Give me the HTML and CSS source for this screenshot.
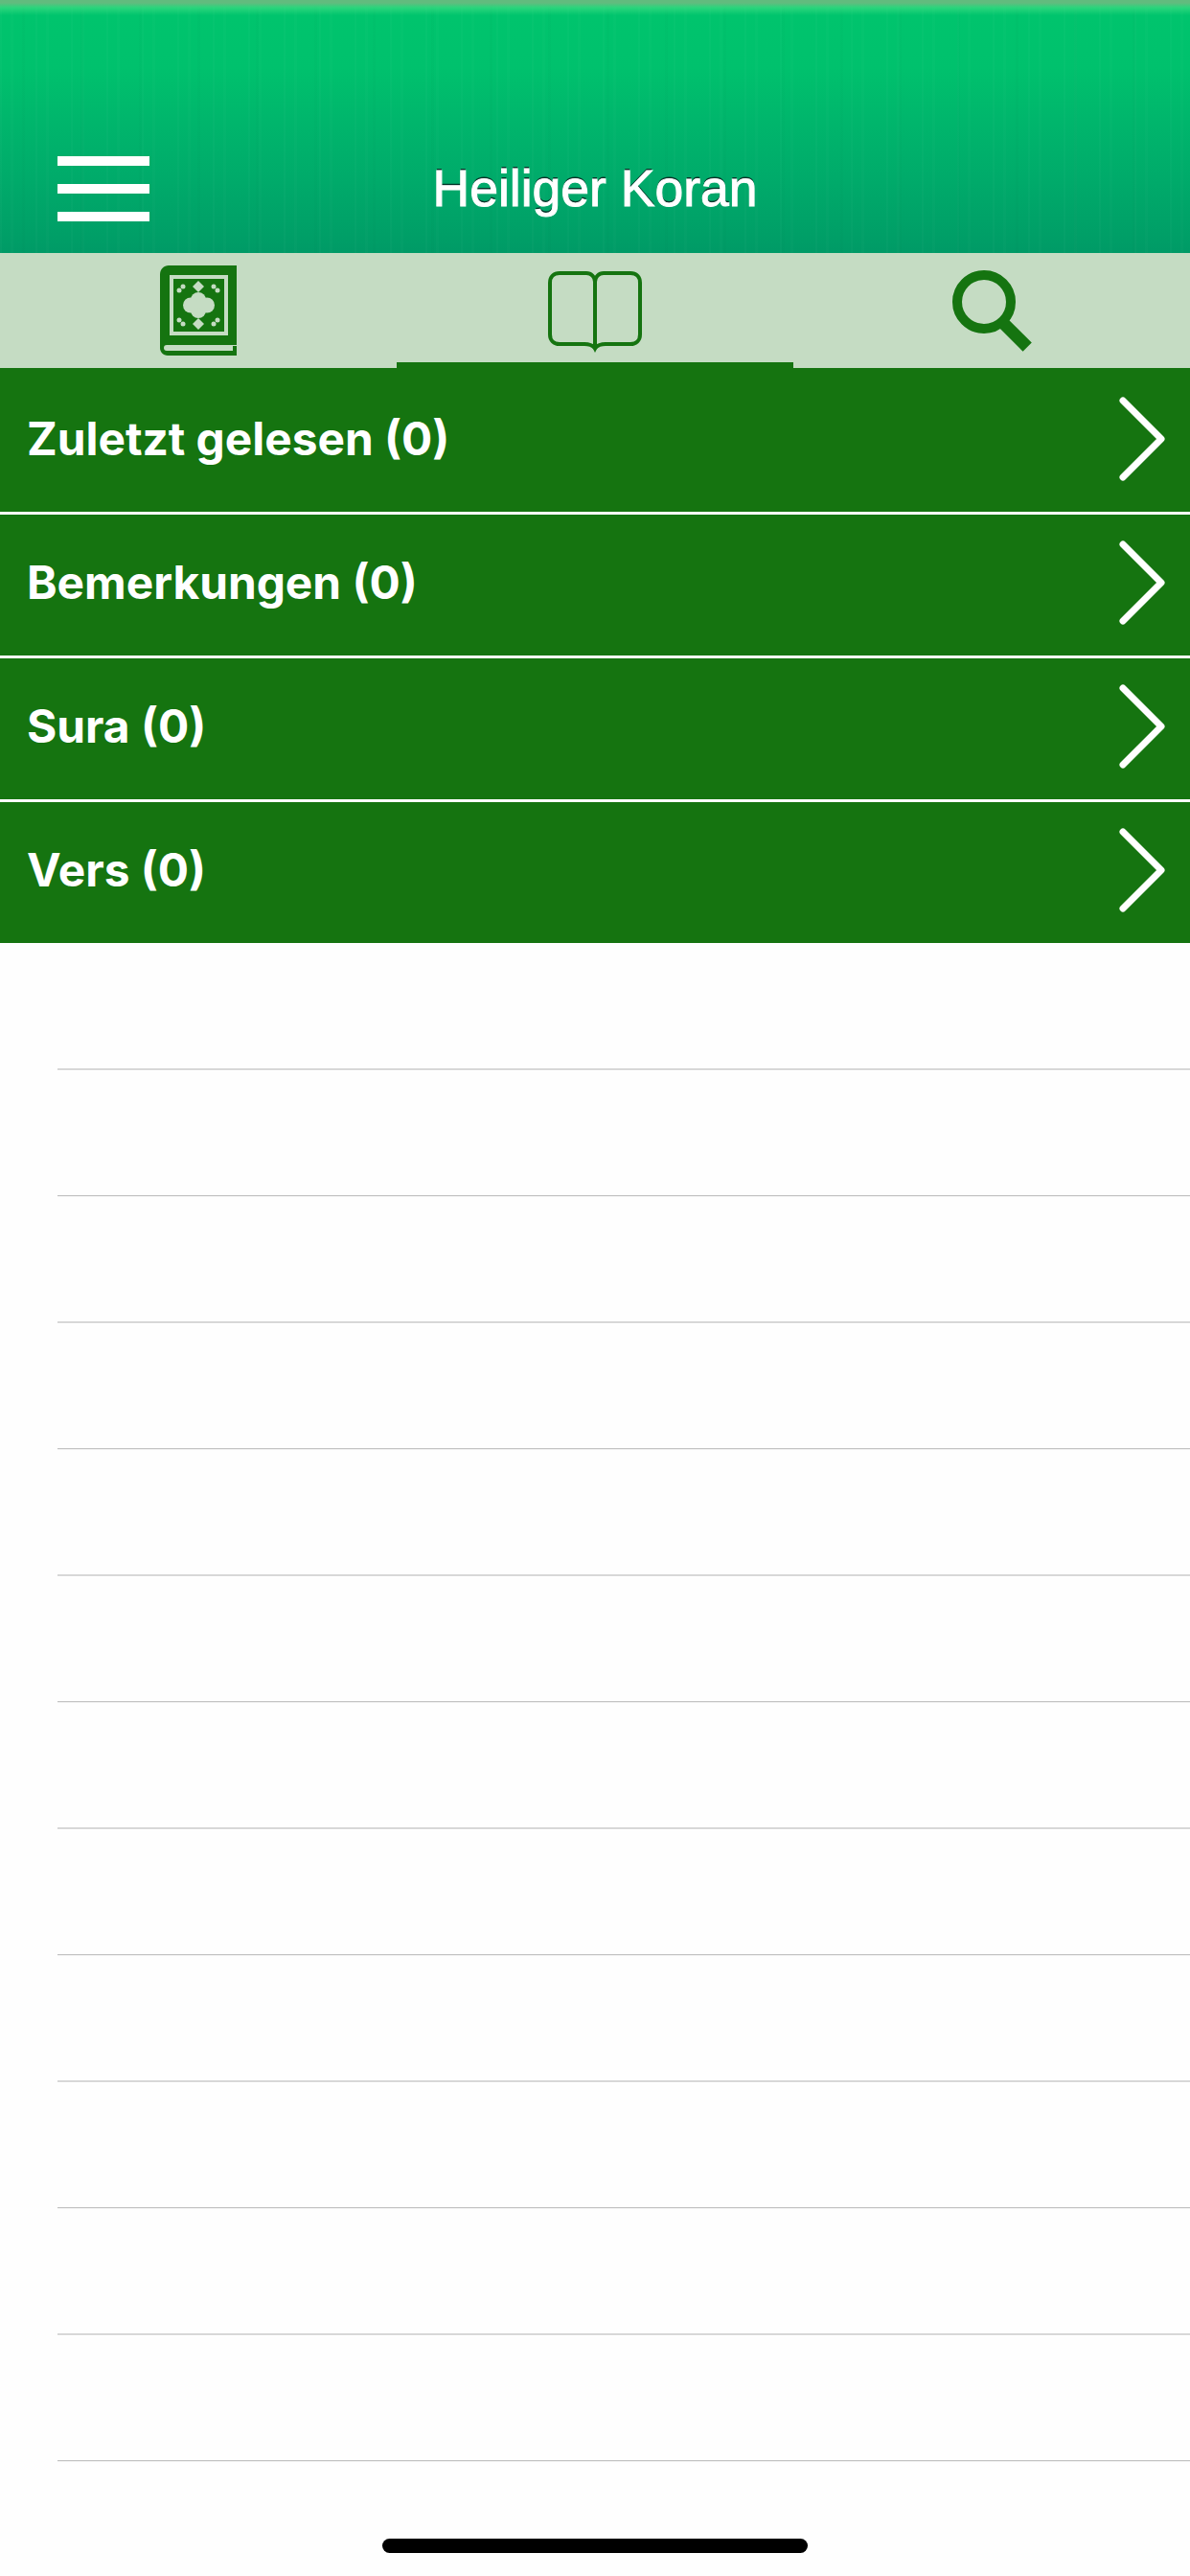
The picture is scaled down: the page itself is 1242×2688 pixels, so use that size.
FILE: index.html
```html
<!DOCTYPE html>
<html lang="de">
<head>
    <meta charset="UTF-8">
    <meta name="viewport" content="width=device-width, initial-scale=1.0">
    <title>Heiliger Koran</title>
    <link rel="stylesheet" href="styles.css">
</head>
<body>
    <div class="app">
        <header class="header">
            <div class="menu-btn">
                <span></span>
                <span></span>
                <span></span>
            </div>
            <h1>Heiliger Koran</h1>
        </header>

        <nav class="tabs">
            <div class="tab">
                <svg width="80" height="94" viewBox="0 0 80 94">
                    <path fill="#157410" d="M9 0H80V94H8C3 94 0 90 0 86V9C0 4 4 0 9 0Z"/>
                    <path fill="#c5dcc3" d="M10 10H71V73H10Z"/>
                    <path fill="#157410" d="M14 14H67V69H14Z"/>
                    <path fill="#c5dcc3" d="M7 83H80V84H76V89H7C5 89 4 88 4 86C4 84 5 83 7 83Z"/>
                    <g fill="#c5dcc3">
                        <path d="M40 16L46 22 40 28 34 22Z"/>
                        <path d="M40 55L46 61 40 67 34 61Z"/>
                        <circle cx="40" cy="36" r="8"/>
                        <circle cx="40" cy="47" r="8"/>
                        <circle cx="32" cy="41.500" r="8"/>
                        <circle cx="49" cy="41.500" r="8"/>
                        <circle cx="20" cy="26" r="2.500"/>
                        <circle cx="24" cy="22" r="2.500"/>
                        <circle cx="56" cy="22" r="2.500"/>
                        <circle cx="60" cy="26" r="2.500"/>
                        <circle cx="20" cy="57" r="2.500"/>
                        <circle cx="24" cy="61" r="2.500"/>
                        <circle cx="56" cy="61" r="2.500"/>
                        <circle cx="60" cy="57" r="2.500"/>
                    </g>
                </svg>
            </div>
            <div class="tab active">
                <svg class="open-book" width="98" height="85" viewBox="0 0 98 85">
                    <path fill="none" stroke="#157410" stroke-width="4" d="M49 80V11C49 6 45 2 40 2H12C6 2 2 6 2 12V66C2 72 6 76 12 76H38C44 76 47 78 49 80C51 78 54 76 60 76H86C92 76 96 72 96 66V12C96 6 92 2 86 2H58C53 2 49 6 49 11"/>
                    <path fill="#157410" d="M45 77H53L49 85Z"/>
                </svg>
            </div>
            <div class="tab">
                <svg width="83" height="85" viewBox="0 0 83 85">
                    <circle cx="33" cy="33" r="28" fill="none" stroke="#157410" stroke-width="10"/>
                    <path fill="none" stroke="#157410" stroke-width="13" d="M52 54L78.200 80.200"/>
                </svg>
            </div>
        </nav>

        <div class="menu-list">
            <div class="menu-row"><span>Zuletzt gelesen (0)</span><svg class="chevron" width="48" height="88" viewBox="0 0 48 88"><path d="M4 4L44 44 4 84"/></svg></div>
            <div class="menu-row"><span>Bemerkungen (0)</span><svg class="chevron" width="48" height="88" viewBox="0 0 48 88"><path d="M4 4L44 44 4 84"/></svg></div>
            <div class="menu-row"><span>Sura (0)</span><svg class="chevron" width="48" height="88" viewBox="0 0 48 88"><path d="M4 4L44 44 4 84"/></svg></div>
            <div class="menu-row"><span>Vers (0)</span><svg class="chevron" width="48" height="88" viewBox="0 0 48 88"><path d="M4 4L44 44 4 84"/></svg></div>
        </div>

        <ul class="empty-list">
            <li></li><li></li><li></li><li></li>
            <li></li><li></li><li></li><li></li>
            <li></li><li></li><li></li><li></li>
        </ul>

        <div class="home-bar"></div>
    </div>
</body>
</html>
```

FILE: styles.css
```css
* {
    box-sizing: border-box;
}
html, body {
    margin: 0;
    height: 100%;
}
body {
    background-color: #fefefe;
    font-family: Inter, "Liberation Sans", sans-serif;
}
.app {
    position: relative;
    height: 2688px;
    overflow: hidden;
}

.header {
    height: 264px;
    display: flex;
    align-items: flex-end;
    position: relative;
    background:
        linear-gradient(180deg, #62bb7e 0, #62bb7e 3px, rgba(60,220,130,0.7) 8px, rgba(0,205,112,0) 16px),
        repeating-linear-gradient(90deg, rgba(255,255,255,0.02) 0 2px, transparent 2px 11px, rgba(255,255,255,0.015) 11px 14px, transparent 14px 37px),
        repeating-linear-gradient(90deg, transparent 0 23px, rgba(0,60,30,0.018) 23px 26px, transparent 26px 61px),
        linear-gradient(180deg, #00c56d 0, #00c16d 70px, #00b66c 125px, #00aa6a 190px, #009f67 245px, #009a66 264px);
}
.menu-btn {
    width: 96px;
    margin: 0 0 33px 60px;
    display: flex;
    flex-direction: column;
    gap: 19px;
}
.menu-btn span {
    height: 10px;
    background-color: #fff;
}
.header h1 {
    position: absolute;
    left: 0;
    right: 0;
    top: 167px;
    margin: 0;
    text-align: center;
    font-family: "Liberation Sans", Arial, sans-serif;
    font-size: 53.500px;
    line-height: 60px;
    font-weight: 400;
    color: #fff;
    -webkit-text-stroke: 1px #fff;
    text-shadow: 0 -2px 0 #04352a;
}

.tabs {
    height: 120px;
    display: flex;
    background-color: #c5dcc3;
}
.tab {
    flex: 1;
    display: flex;
    align-items: center;
    justify-content: center;
}
.tab.active {
    box-shadow: inset 0 -6px 0 #157410;
}
.open-book {
    margin-top: 3px;
}

.menu-row {
    height: 150px;
    display: flex;
    align-items: center;
    justify-content: space-between;
    padding: 0 26px 0 28px;
    background-color: #157410;
    color: #fff;
    font-size: 47.800px;
    font-weight: 700;
}
.menu-row span {
    padding-bottom: 2px;
}
.menu-row + .menu-row {
    border-top: 3px solid #fff;
    padding-bottom: 3px;
}
.chevron {
    margin-bottom: 2px;
    fill: none;
    stroke: #fff;
    stroke-width: 7;
    stroke-linecap: round;
    stroke-linejoin: round;
}

.empty-list {
    list-style: none;
    margin: 0;
    padding: 0 0 0 60px;
}
.empty-list li {
    height: 132px;
    border-bottom: 1px solid #c4c4c4;
    box-shadow: 0 1px 0 #eeeeee;
}

.home-bar {
    position: absolute;
    left: 399px;
    top: 2649px;
    width: 444px;
    height: 15px;
    border-radius: 8px;
    background-color: #000;
}
```
